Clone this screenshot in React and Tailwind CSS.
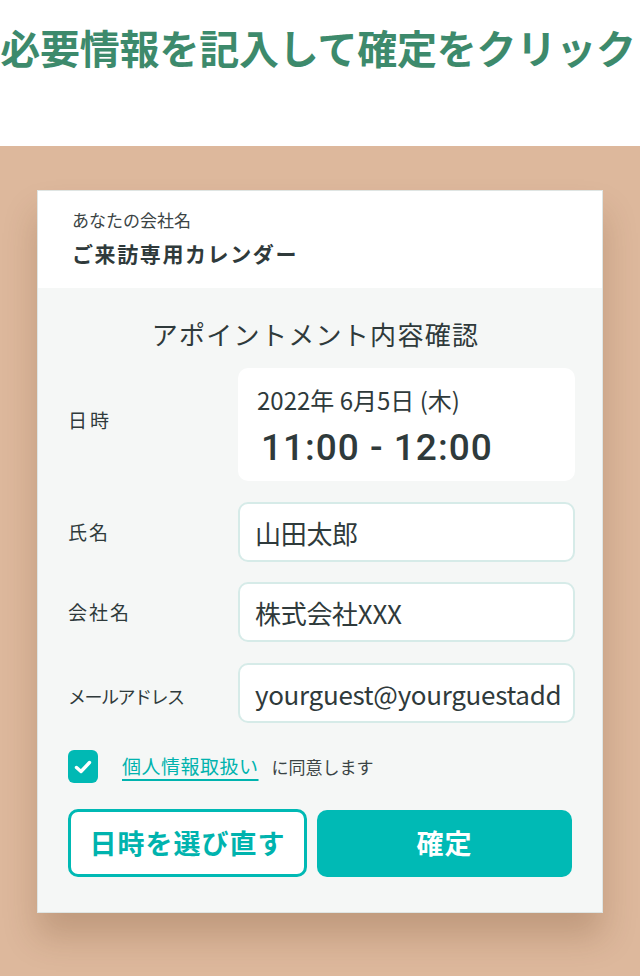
import React from "react";

const jp = { fontFamily: '"Noto Sans CJK JP", "Noto Sans", sans-serif' };

export default function App() {
  return (
    <div className="w-[640px] min-h-[976px] bg-white flex flex-col" style={jp}>
      <div className="h-[146px] flex items-start justify-center pt-[19px]">
        <h1 className="text-[40px] leading-[56px] font-bold text-[#3d8a6c] whitespace-nowrap tracking-[-0.2px] pr-[4px]">
          必要情報を記入して確定をクリック
        </h1>
      </div>
      <div className="flex-1 bg-[#ddb89c] pt-[44px] pb-[65px] pl-[37px]">
        <div className="w-[566px] border border-[#dfe5e3] shadow-[0_24px_32px_rgba(90,50,20,0.22)]">
          <div className="bg-white h-[97px] pl-[34px] pt-[16px]">
            <div className="text-[17px] leading-[26px] text-[#3b4445]">あなたの会社名</div>
            <div className="text-[21px] leading-[30px] font-bold text-[#2f3a3b] mt-[5px] tracking-[1.6px]">
              ご来訪専用カレンダー
            </div>
          </div>
          <div className="bg-[#f5f7f6] pl-[30px] pr-[27px] pt-[28px] pb-[35px]">
            <div className="text-center text-[26px] leading-[36px] text-[#2f3a3b] tracking-[1.3px] pr-[12px]">
              アポイントメント内容確認
            </div>
            <div className="mt-[16px] flex items-center">
              <div className="w-[170px] text-[19px] text-[#2f3a3b] tracking-[3px] mb-[8px]">日時</div>
              <div className="w-[337px] h-[113px] bg-white rounded-[10px] pl-[19px] pt-[15px]">
                <div className="text-[24px] leading-[34px] text-[#2f3a3b] tracking-[0px]">2022年 6月5日 (木)</div>
                <div
                  className="text-[37px] leading-[46px] font-medium text-[#2f3a3b] ml-[4px] mt-[8px] tracking-[1px]"
                  style={{ fontFamily: 'Roboto, "Noto Sans", sans-serif' }}
                >
                  11:00 - 12:00
                </div>
              </div>
            </div>
            <Field label="氏名" value="山田太郎" className="mt-[21px]" />
            <Field label="会社名" value="株式会社XXX" className="mt-[20px]" />
            <Field label="メールアドレス" value="yourguest@yourguestadd" className="mt-[21px]" small />
            <div className="mt-[27px] flex items-center">
              <div className="w-[30px] h-[33px] rounded-[6px] bg-[#00b9b4] flex items-center justify-center">
                <svg width="18" height="14" viewBox="0 0 18 14" fill="none">
                  <path d="M2.5 7.5 L7 11.5 L15.5 2.5" stroke="white" strokeWidth="3.4" strokeLinecap="round" strokeLinejoin="round" />
                </svg>
              </div>
              <span className="ml-[24px] text-[19px] text-[#00b3ae] underline underline-offset-[5px] decoration-[2px] tracking-[0.5px]">
                個人情報取扱い
              </span>
              <span className="ml-[13px] text-[17px] text-[#3b4445]">に同意します</span>
            </div>
            <div className="mt-[26px] flex gap-[10px]">
              <button className="w-[239px] h-[68px] border-[3px] border-[#00b9b4] rounded-[10px] bg-white text-[#00b3ae] text-[27px] font-bold tracking-[1px]">
                日時を選び直す
              </button>
              <button className="w-[255px] h-[67px] mt-[1px] rounded-[10px] bg-[#00bab5] text-white text-[27px] font-bold tracking-[1px]">
                確定
              </button>
            </div>
          </div>
        </div>
      </div>
    </div>
  );
}

function Field({ label, value, className, small }) {
  return (
    <div className={"flex items-center " + className}>
      <div className={"w-[170px] text-[#2f3a3b] " + (small ? "text-[18px] tracking-[-1.5px] mt-[6px]" : "text-[19px] tracking-[2px] mt-[0px]")}>
        {label}
      </div>
      <div className="w-[337px] h-[60px] bg-white border-2 border-[#d6ebe8] rounded-[10px] pl-[15px] flex items-center overflow-hidden">
        <span className="text-[26px] text-[#2f3a3b] whitespace-nowrap tracking-[-0.3px]">{value}</span>
      </div>
    </div>
  );
}
